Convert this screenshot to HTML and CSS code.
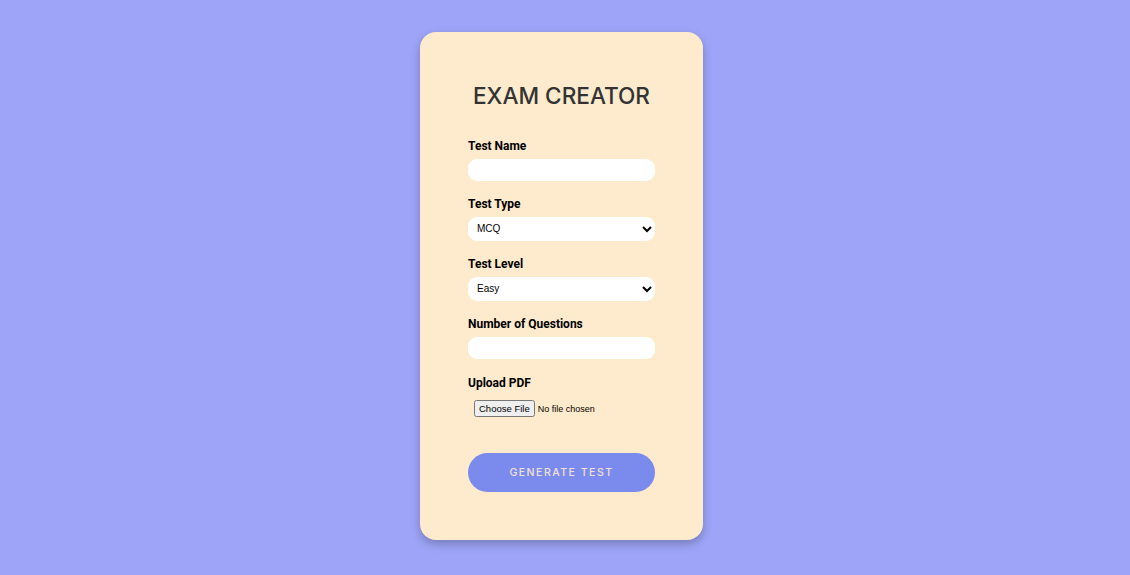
FILE: index.html
```html
<!DOCTYPE html>
<html lang="en">
<head>
<meta charset="utf-8">
<title>Exam Creator</title>
<link rel="stylesheet" href="styles.css">
</head>
<body>
<main class="card">
  <h1 class="title">EXAM CREATOR</h1>
  <form class="form">
    <div class="group">
      <label class="label" for="name">Test Name</label>
      <input class="field" id="name" type="text">
    </div>
    <div class="group">
      <label class="label" for="type">Test Type</label>
      <select class="field select" id="type"><option>MCQ</option></select>
    </div>
    <div class="group">
      <label class="label" for="level">Test Level</label>
      <select class="field select" id="level"><option>Easy</option></select>
    </div>
    <div class="group">
      <label class="label" for="num">Number of Questions</label>
      <input class="field" id="num" type="text">
    </div>
    <div class="group">
      <label class="label" for="pdf">Upload PDF</label>
      <input class="file" id="pdf" type="file">
    </div>
    <button class="btn" type="button">GENERATE TEST</button>
  </form>
</main>
</body>
</html>
```

FILE: styles.css
```css
html, body {
  margin: 0;
  height: 100%;
}
body {
  background: #9ea5f8;
  display: flex;
  justify-content: center;
  align-items: flex-start;
  padding: 32px 7px 0 0;
  box-sizing: border-box;
  font-family: Roboto, "Liberation Sans", sans-serif;
}
.card {
  width: 283px;
  box-sizing: border-box;
  background: #feebcd;
  border-radius: 16px;
  padding: 48.5px 48px 48px 48px;
  box-shadow: 0 4px 10px rgba(0, 0, 0, 0.25);
}
.title {
  margin: 0 0 28px;
  font-family: Inter, "Open Sans", sans-serif;
  font-weight: 500;
  font-size: 22.6px;
  line-height: 29px;
  color: #333;
  text-align: center;
}
.form {
  display: flex;
  flex-direction: column;
}
.group {
  display: flex;
  flex-direction: column;
  margin-bottom: 15.6px;
}
.label {
  font-size: 12px;
  font-weight: 700;
  line-height: 16px;
  color: #000;
  margin-bottom: 5px;
}
.field {
  height: 22px;
  box-sizing: border-box;
  border: none;
  border-radius: 9px;
  background: #fff;
  padding: 0 6px;
  font-size: 10px;
  font-family: "Liberation Sans", Arial, sans-serif;
  outline: none;
}
.select {
  height: 23.5px;
  padding: 0 5px;
  color: #000;
}
.file {
  font-size: 9px;
  font-family: "Liberation Sans", Arial, sans-serif;
  padding: 4px 6px 6px;
}
.file::file-selector-button {
  font-size: 9.5px;
  padding: 1px 3px;
  margin-right: 3px;
}
.btn {
  margin-top: 15px;
  height: 39px;
  border: none;
  border-radius: 20px;
  background: #7b8aed;
  color: #f3e2d2;
  font-family: Inter, "Open Sans", sans-serif;
  font-size: 10.5px;
  font-weight: 500;
  letter-spacing: 1.5px;
}
```
